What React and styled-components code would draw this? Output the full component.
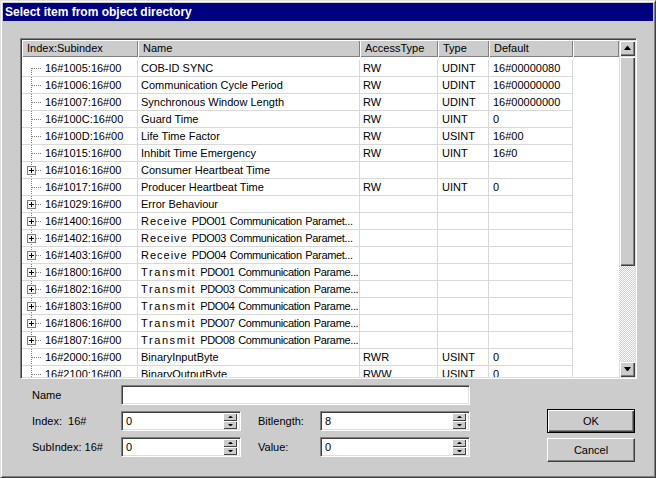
import styled, { createGlobalStyle, css } from 'styled-components'

const FACE = '#cccccc'

const GlobalStyle = createGlobalStyle`
  html, body {
    margin: 0;
    padding: 0;
    background: ${FACE};
  }
  body {
    font-family: 'Liberation Sans', Arial, sans-serif;
    font-size: 11px;
    color: #000;
  }
`

const Window = styled.div`
  width: 656px;
  height: 478px;
  box-sizing: border-box;
  background: ${FACE};
  border: 1px solid;
  border-color: #dfdfdf #404040 #404040 #dfdfdf;
  box-shadow: inset 1px 1px #fff, inset -1px -1px #808080;
  padding: 2px;
  display: flex;
  flex-direction: column;
`

const TitleBar = styled.div`
  height: 18px;
  line-height: 18px;
  padding-left: 2px;
  background: #000080;
  color: #fff;
  font-weight: bold;
  font-size: 12px;
  white-space: nowrap;
`

const Content = styled.div`
  padding: 17px 16px 0 17px;
  display: flex;
  flex-direction: column;
`

/* sunken 2px frame, like every win32 list/edit */
const sunken = css`
  border: 1px solid;
  border-color: #808080 #fff #fff #808080;
  box-shadow: inset 1px 1px #404040, inset -1px -1px #dfdfdf;
`

const raised = css`
  box-shadow: inset 1px 1px #dfdfdf, inset 2px 2px #fff, inset -1px -1px #404040,
    inset -2px -2px #808080;
`

const ListView = styled.div`
  ${sunken};
  width: 617px;
  height: 341px;
  box-sizing: border-box;
  padding: 1px;
  background: #fff;
  display: flex;
`

const ListMain = styled.div`
  flex: 1;
  display: flex;
  flex-direction: column;
  overflow: hidden;
`

const HeaderRow = styled.div`
  display: flex;
  height: 17px;
  flex: none;
`

const HeaderCell = styled.div`
  box-sizing: border-box;
  width: ${(p) => (p.$w ? `${p.$w}px` : 'auto')};
  flex: ${(p) => (p.$w ? 'none' : '1')};
  height: 17px;
  line-height: 17px;
  padding-left: 5px;
  background: ${FACE};
  box-shadow: inset 1px 1px #fff, inset -1px -1px #808080;
  white-space: nowrap;
  overflow: hidden;
`

const Rows = styled.div`
  padding-top: 3px;
`

const Row = styled.div`
  display: flex;
  height: 17px;
`

const Cell = styled.div`
  box-sizing: border-box;
  width: ${(p) => p.$w}px;
  flex: none;
  height: 17px;
  line-height: 16px;
  padding-left: ${(p) => p.$pad ?? 4}px;
  border-right: 1px solid #d9d9d9;
  border-bottom: 1px solid #d9d9d9;
  white-space: nowrap;
  overflow: hidden;
  display: flex;
  align-items: center;
`

const Lead = styled.span`
  letter-spacing: ${(p) => p.$ls}px;
  margin-right: 4px;
`

const Rest = styled.span`
  letter-spacing: -0.35px;
  word-spacing: 1px;
`

const ScrollBar = styled.div`
  width: 16px;
  flex: none;
  display: flex;
  flex-direction: column;
`

const ScrollButton = styled.div`
  height: 16px;
  flex: none;
  background: ${FACE};
  ${raised};
  display: flex;
  align-items: center;
  justify-content: center;

  &::before {
    content: '';
    width: 1px;
    height: 0;
    border: solid transparent;
    border-width: ${(p) => (p.$down ? '4px 3px 0' : '0 3px 4px')};
    border-${(p) => (p.$down ? 'top' : 'bottom')}-color: #000;
  }
`

const Thumb = styled.div`
  height: 210px;
  flex: none;
  background: ${FACE};
  ${raised};
`

const Track = styled.div`
  flex: 1;
  background: repeating-conic-gradient(#fff 0 25%, ${FACE} 0 50%) 0 0 / 2px 2px;
`

const Bottom = styled.div`
  display: flex;
  margin-top: 6px;
`

const Form = styled.div`
  margin-left: 12px;
  display: grid;
  grid-template-columns: 89px 120px 17px 62px 150px;
  grid-template-rows: 20px 20px 20px;
  row-gap: 6px;
  align-items: center;
`

const Label = styled.div`
  grid-column: ${(p) => p.$col};
  white-space: pre;
`

const Field = styled.div`
  ${sunken};
  grid-column: ${(p) => p.$span || 'auto'};
  height: 20px;
  box-sizing: border-box;
  background: #fff;
  display: flex;
  align-items: center;
  padding: 1px 3px 1px 4px;
`

const FieldText = styled.span`
  flex: 1;
`

const Spinner = styled.div`
  width: 14px;
  align-self: stretch;
  display: flex;
  flex-direction: column;
`

const SpinButton = styled.div`
  flex: 1;
  background: ${FACE};
  box-shadow: inset 1px 1px #fff, inset -1px -1px #404040;
  display: flex;
  align-items: center;
  justify-content: center;

  &::before {
    content: '';
    width: 1px;
    height: 0;
    border: solid transparent;
    border-width: ${(p) => (p.$down ? '2px 2px 0' : '0 2px 2px')};
    border-${(p) => (p.$down ? 'top' : 'bottom')}-color: #000;
  }
`

const Buttons = styled.div`
  margin: 24px 2px 0 auto;
  display: flex;
  flex-direction: column;
  gap: 5px;
`

const Button = styled.button`
  width: 88px;
  height: 24px;
  box-sizing: border-box;
  padding: 0;
  font: 11px 'Liberation Sans', Arial, sans-serif;
  color: #000;
  background: ${FACE};
  border: 1px solid;
  border-color: #fff #404040 #404040 #fff;
  box-shadow: inset -1px -1px #808080;

  ${(p) =>
    p.$default &&
    css`
      border-color: #000;
      box-shadow: inset 1px 1px #fff, inset -1px -1px #404040, inset -2px -2px #808080;
    `}
`

const COLS = [116, 222, 78, 51, 84]

const ROWS = [
  { idx: '16#1005:16#00', name: 'COB-ID SYNC', access: 'RW', type: 'UDINT', def: '16#00000080' },
  { idx: '16#1006:16#00', name: 'Communication Cycle Period', access: 'RW', type: 'UDINT', def: '16#00000000' },
  { idx: '16#1007:16#00', name: 'Synchronous Window Length', access: 'RW', type: 'UDINT', def: '16#00000000' },
  { idx: '16#100C:16#00', name: 'Guard Time', access: 'RW', type: 'UINT', def: '0' },
  { idx: '16#100D:16#00', name: 'Life Time Factor', access: 'RW', type: 'USINT', def: '16#00' },
  { idx: '16#1015:16#00', name: 'Inhibit Time Emergency', access: 'RW', type: 'UINT', def: '16#0' },
  { idx: '16#1016:16#00', name: 'Consumer Heartbeat Time', plus: true },
  { idx: '16#1017:16#00', name: 'Producer Heartbeat Time', access: 'RW', type: 'UINT', def: '0' },
  { idx: '16#1029:16#00', name: 'Error Behaviour', plus: true },
  { idx: '16#1400:16#00', lead: 'Receive', name: 'PDO01 Communication Paramet...', plus: true },
  { idx: '16#1402:16#00', lead: 'Receive', name: 'PDO03 Communication Paramet...', plus: true },
  { idx: '16#1403:16#00', lead: 'Receive', name: 'PDO04 Communication Paramet...', plus: true },
  { idx: '16#1800:16#00', lead: 'Transmit', name: 'PDO01 Communication Parame...', plus: true },
  { idx: '16#1802:16#00', lead: 'Transmit', name: 'PDO03 Communication Parame...', plus: true },
  { idx: '16#1803:16#00', lead: 'Transmit', name: 'PDO04 Communication Parame...', plus: true },
  { idx: '16#1806:16#00', lead: 'Transmit', name: 'PDO07 Communication Parame...', plus: true },
  { idx: '16#1807:16#00', lead: 'Transmit', name: 'PDO08 Communication Parame...', plus: true },
  { idx: '16#2000:16#00', name: 'BinaryInputByte', access: 'RWR', type: 'USINT', def: '0' },
  { idx: '16#2100:16#00', name: 'BinaryOutputByte', access: 'RWW', type: 'USINT', def: '0' },
]

// dotted tree connector (+ expand box) in front of the index
function Twig({ first, plus }) {
  return (
    <svg width="23" height="16" style={{ flex: 'none', display: 'block' }} shapeRendering="crispEdges">
      <line x1="9.5" y1={first ? 8 : 0} x2="9.5" y2="16" stroke="#808080" strokeDasharray="1 1" />
      <line x1="10" y1="8.5" x2="20" y2="8.5" stroke="#808080" strokeDasharray="1 1" />
      {plus && (
        <>
          <rect x="5.5" y="4.5" width="8" height="8" fill="#f4f4f4" stroke="#808080" />
          <line x1="7" y1="8.5" x2="12" y2="8.5" stroke="#000" />
          <line x1="9.5" y1="6" x2="9.5" y2="11" stroke="#000" />
        </>
      )}
    </svg>
  )
}

function SpinField({ value }) {
  return (
    <Field>
      <FieldText>{value}</FieldText>
      <Spinner>
        <SpinButton />
        <SpinButton $down />
      </Spinner>
    </Field>
  )
}

export default function App() {
  return (
    <>
      <GlobalStyle />
      <Window>
        <TitleBar>Select item from object directory</TitleBar>
        <Content>
          <ListView>
            <ListMain>
              <HeaderRow>
                <HeaderCell $w={COLS[0]}>Index:Subindex</HeaderCell>
                <HeaderCell $w={COLS[1]}>Name</HeaderCell>
                <HeaderCell $w={COLS[2]}>AccessType</HeaderCell>
                <HeaderCell $w={COLS[3]}>Type</HeaderCell>
                <HeaderCell $w={COLS[4]}>Default</HeaderCell>
                <HeaderCell />
              </HeaderRow>
              <Rows>
                {ROWS.map((r, i) => (
                  <Row key={r.idx}>
                    <Cell $w={COLS[0]} $pad={0}>
                      <Twig first={i === 0} plus={r.plus} />
                      {r.idx}
                    </Cell>
                    <Cell $w={COLS[1]} $pad={3}>
                      {r.lead ? (
                        <>
                          <Lead $ls={r.lead === 'Transmit' ? 1.6 : 1}>{r.lead}</Lead>
                          <Rest>{r.name}</Rest>
                        </>
                      ) : (
                        r.name
                      )}
                    </Cell>
                    <Cell $w={COLS[2]} $pad={3}>{r.access}</Cell>
                    <Cell $w={COLS[3]}>{r.type}</Cell>
                    <Cell $w={COLS[4]}>{r.def}</Cell>
                  </Row>
                ))}
              </Rows>
            </ListMain>
            <ScrollBar>
              <ScrollButton />
              <Thumb />
              <Track />
              <ScrollButton $down />
            </ScrollBar>
          </ListView>

          <Bottom>
            <Form>
              <Label $col={1}>Name</Label>
              <Field $span="2 / 6" />
              <Label $col={1}>{'Index:  16#'}</Label>
              <SpinField value="0" />
              <Label $col={4}>Bitlength:</Label>
              <SpinField value="8" />
              <Label $col={1}>SubIndex: 16#</Label>
              <SpinField value="0" />
              <Label $col={4}>Value:</Label>
              <SpinField value="0" />
            </Form>
            <Buttons>
              <Button $default>OK</Button>
              <Button>Cancel</Button>
            </Buttons>
          </Bottom>
        </Content>
      </Window>
    </>
  )
}
